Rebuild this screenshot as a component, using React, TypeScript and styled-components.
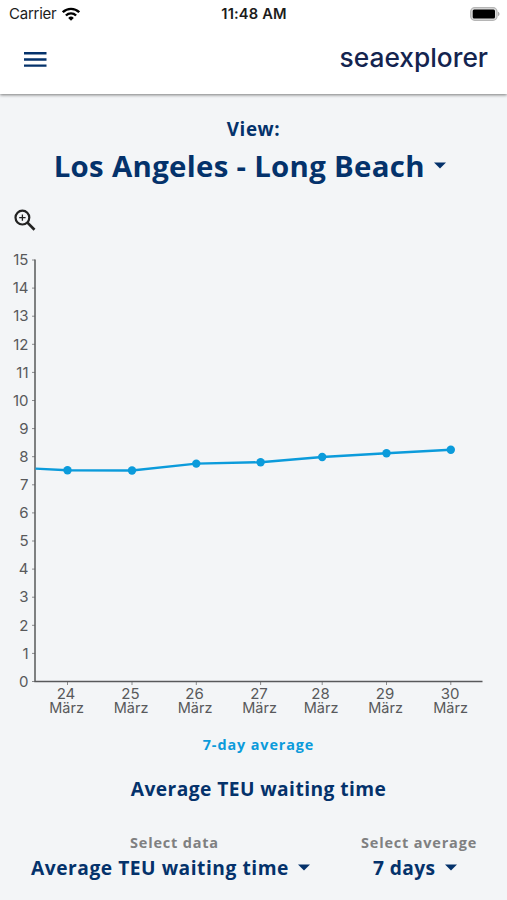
import React from 'react';
import styled, { createGlobalStyle } from 'styled-components';

const navy = '#04326b';
const blue = '#0b9bdb';
const sans = '"Open Sans", "Noto Sans", sans-serif';
const system = 'Inter, "Liberation Sans", sans-serif';

const GlobalStyle = createGlobalStyle`
  * { box-sizing: border-box; }
  body { margin: 0; background: #f3f5f7; }
`;

const Screen = styled.div`
  width: 507px;
  height: 900px;
  display: flex;
  flex-direction: column;
  overflow: hidden;
  background: #f3f5f7;
  font-family: ${sans};
  color: ${navy};
`;

const TopBar = styled.header`
  height: 94px;
  flex: none;
  background: #fff;
  box-shadow: 0 1px 3px rgba(0, 0, 0, 0.5);
`;

const StatusBar = styled.div`
  height: 28px;
  display: grid;
  grid-template-columns: 1fr auto 1fr;
  align-items: center;
  padding: 0 7px 0 9px;
  font-family: ${system};
  color: #1c1c1c;
`;

const Carrier = styled.div`
  display: flex;
  align-items: center;
  gap: 6px;
  font-size: 15px;
  line-height: 28px;
  letter-spacing: -0.25px;
`;

const Clock = styled.div`
  font-size: 14.7px;
  font-weight: 600;
  line-height: 28px;
  letter-spacing: 0.15px;
  padding-right: 1px;
`;

const Battery = styled.div`
  display: flex;
  justify-content: flex-end;
`;

const NavRow = styled.div`
  height: 66px;
  display: flex;
  align-items: flex-start;
  justify-content: space-between;
  padding: 0 19px 0 24px;
`;

const MenuButton = styled.button`
  display: flex;
  padding: 0;
  margin-top: 23px;
  border: 0;
  background: none;
`;

const Brand = styled.div`
  font-family: ${system};
  font-size: 26.3px;
  font-weight: 500;
  line-height: 32px;
  margin-top: 14px;
  color: #14244f;
`;

const ViewPicker = styled.section`
  display: flex;
  flex-direction: column;
  align-items: center;
  padding-top: 23px;
`;

const ViewLabel = styled.div`
  font-size: 18.8px;
  line-height: 24px;
  font-weight: 700;
  letter-spacing: 0.6px;
`;

const Picker = styled.button<{ $size: number; $line: number; $spacing: number; $gap: number }>`
  display: flex;
  align-items: center;
  gap: ${(p) => p.$gap}px;
  padding: 0;
  border: 0;
  background: none;
  font-family: inherit;
  color: inherit;
  font-weight: 700;
  white-space: nowrap;
  font-size: ${(p) => p.$size}px;
  line-height: ${(p) => p.$line}px;
  letter-spacing: ${(p) => p.$spacing}px;
`;

const PortPicker = styled(Picker)`
  padding-right: 7px;

  svg { margin-bottom: 2px; }
`;

const ZoomRow = styled.div`
  height: 49px;
  display: flex;
  padding: 18px 0 0 14px;
`;

const Chart = styled.svg`
  display: block;
  flex: none;
  font-family: ${system};
  font-size: 15px;
  fill: #58595b;
`;

const MonthLabels = styled.g`
  font-size: 14.5px;
`;

const Legend = styled.div`
  text-align: center;
  font-size: 14.4px;
  line-height: 20px;
  margin-top: 1px;
  font-weight: 700;
  letter-spacing: 0.9px;
  padding-left: 10px;
  color: ${blue};
`;

const Heading = styled.h2`
  margin: 21px 0 0;
  padding-left: 10px;
  text-align: center;
  font-size: 19.2px;
  line-height: 26px;
  font-weight: 700;
  letter-spacing: 0.43px;
`;

const Filters = styled.footer`
  display: flex;
  justify-content: space-between;
  padding: 30px 30px 0 31px;
`;

const Filter = styled.div`
  display: flex;
  flex-direction: column;
  align-items: center;
`;

const FilterLabel = styled.div`
  font-size: 14.5px;
  line-height: 21px;
  font-weight: 700;
  letter-spacing: 0.8px;
  color: #7f8081;
  padding-left: 8px;
`;

const Caret = () => (
  <svg width="12" height="7" viewBox="0 0 12 7"><path d="M0 0.5h12L6 6.5z" fill={navy} /></svg>
);

const points = [
  { x: 67.5, day: '24', y: 470.2, label: 66.5 },
  { x: 132, day: '25', y: 470.5, label: 131 },
  { x: 196.3, day: '26', y: 463.6, label: 195 },
  { x: 260.6, day: '27', y: 462.2, label: 259.5 },
  { x: 322.2, day: '28', y: 457, label: 321 },
  { x: 386.5, day: '29', y: 453.2, label: 385.5 },
  { x: 450.8, day: '30', y: 449.8, label: 450.5 },
];
const top = 240;
const zero = 681.5;
const step = 28.1;

export default function App() {
  return (
    <Screen>
      <GlobalStyle />
      <TopBar>
        <StatusBar>
          <Carrier>
            Carrier
            <svg width="18" height="14" viewBox="0 0 18 14" fill="none" stroke="#000" strokeWidth="2.4">
              <path d="M0.8 5.2a11.7 11.7 0 0 1 16.4 0" />
              <path d="M3.9 8.5a7.3 7.3 0 0 1 10.2 0" />
              <path d="M9 13.7L6.2 10.9a4 4 0 0 1 5.6 0z" fill="#000" stroke="none" />
            </svg>
          </Carrier>
          <Clock>11:48 AM</Clock>
          <Battery>
            <svg width="30" height="15" viewBox="0 0 30 15">
              <rect x="0.7" y="0.7" width="26.3" height="12.6" rx="4" fill="#ddd" stroke="#b5b5b5" strokeWidth="1.3" />
              <rect x="2.7" y="2.4" width="22.3" height="9.1" rx="1.5" fill="#000" />
              <path d="M28 4.8v4.4c2-.7 2-3.7 0-4.4z" fill="#aaa" />
            </svg>
          </Battery>
        </StatusBar>
        <NavRow>
          <MenuButton aria-label="Menu">
            <svg width="23" height="17" viewBox="0 0 23 17" stroke={navy} strokeWidth="2.4">
              <path d="M0 2.3h22.5M0 8.5h22.5M0 14.6h22.5" />
            </svg>
          </MenuButton>
          <Brand>seaexplorer</Brand>
        </NavRow>
      </TopBar>

      <ViewPicker>
        <ViewLabel>View:</ViewLabel>
        <PortPicker $size={29.4} $line={50} $spacing={0.3} $gap={9.5}>
          Los Angeles - Long Beach <Caret />
        </PortPicker>
      </ViewPicker>

      <ZoomRow>
        <svg width="22" height="23" viewBox="0 0 22 23" fill="none" stroke="#222">
          <circle cx="8.4" cy="8.6" r="6.9" strokeWidth="2.2" />
          <path d="M13.2 13.4L20.5 20.7" strokeWidth="2.7" />
          <path d="M5.2 8.6h6.4M8.4 5.4v6.4" strokeWidth="1.3" />
        </svg>
      </ZoomRow>

      <Chart width="507" height="494" viewBox={`0 ${top} 507 494`}>
        <g textAnchor="end">
          {Array.from({ length: 16 }, (_, n) => (
            <text key={n} x="28.5" y={zero - n * step + 5.2}>{n}</text>
          ))}
        </g>
        <g stroke="#8a8b8d" strokeWidth="1">
          {Array.from({ length: 16 }, (_, n) => (
            <path key={n} d={`M32 ${zero - n * step}h3`} />
          ))}
          {points.map((p) => <path key={p.day} d={`M${p.x} 682v3`} />)}
        </g>
        <path d="M35 259.5V681.5H482.5" fill="none" stroke="#58595b" strokeWidth="1.5" />
        <g textAnchor="middle">
          {points.map((p) => (
            <text key={p.day} x={p.label - 0.5} y="698.5">{p.day}</text>
          ))}
        </g>
        <MonthLabels textAnchor="middle">
          {points.map((p) => (
            <text key={p.day} x={p.label + 0.1} y="713.2">März</text>
          ))}
        </MonthLabels>
        <path
          d={`M35.5 468.6 ${points.map((p) => `L${p.x} ${p.y}`).join(' ')}`}
          fill="none" stroke={blue} strokeWidth="2.4"
        />
        {points.map((p) => <circle key={p.day} cx={p.x} cy={p.y} r="4.2" fill={blue} />)}
      </Chart>

      <Legend>7-day average</Legend>
      <Heading>Average TEU waiting time</Heading>

      <Filters>
        <Filter>
          <FilterLabel>Select data</FilterLabel>
          <Picker $size={19.2} $line={29} $spacing={0.53} $gap={9}>
            Average TEU waiting time <Caret />
          </Picker>
        </Filter>
        <Filter>
          <FilterLabel>Select average</FilterLabel>
          <Picker $size={19.2} $line={29} $spacing={0.4} $gap={9.5}>
            7 days <Caret />
          </Picker>
        </Filter>
      </Filters>
    </Screen>
  );
}
